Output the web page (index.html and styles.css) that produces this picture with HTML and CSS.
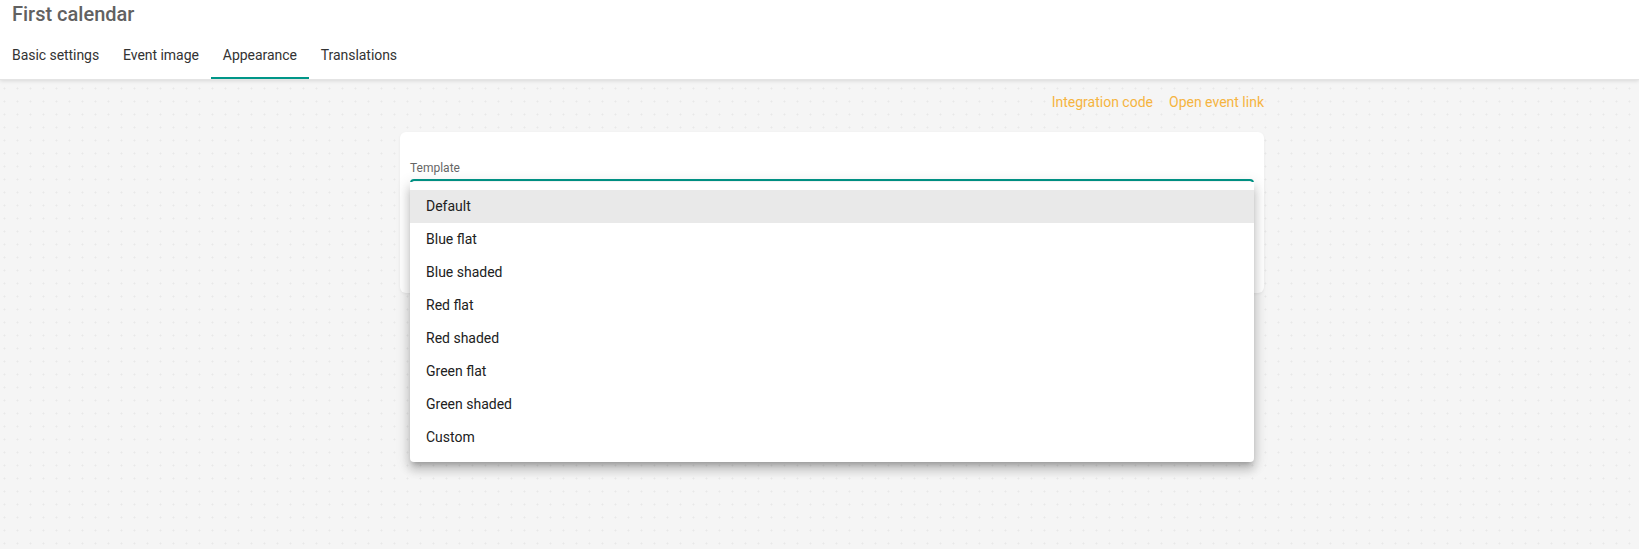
FILE: index.html
```html
<!DOCTYPE html>
<html lang="en">
<head>
  <meta charset="UTF-8" />
  <title>First calendar - Appearance</title>
  <meta name="viewport" content="width=device-width, initial-scale=1.0" />
  <link rel="stylesheet" href="styles.css">
</head>
<body>
  <header class="topbar">
    <h1 class="title">First calendar</h1>
    <nav class="tabs">
      <a class="tab">Basic settings</a>
      <a class="tab">Event image</a>
      <a class="tab active">Appearance</a>
      <a class="tab">Translations</a>
    </nav>
  </header>

  <main class="content">
    <div class="links">
      <a class="link">Integration code</a>
      <a class="link">Open event link</a>
    </div>

    <section class="card">
      <label class="field-label">Template</label>
      <div class="select">
        <ul class="menu">
          <li class="option selected">Default</li>
          <li class="option">Blue flat</li>
          <li class="option">Blue shaded</li>
          <li class="option">Red flat</li>
          <li class="option">Red shaded</li>
          <li class="option">Green flat</li>
          <li class="option">Green shaded</li>
          <li class="option">Custom</li>
        </ul>
      </div>
    </section>
  </main>
</body>
</html>
```

FILE: styles.css
```css
html, body {
  height: 100%;
}
body {
  margin: 0;
  font-family: Roboto, 'Noto Sans', sans-serif;
  color: #212121;
  background-color: #f5f5f5;
  background-image: radial-gradient(circle at 4.5px 10.5px, #e8e8e8 0.8px, transparent 1.2px);
  background-size: 13px 13px;
  overflow: hidden;
}
.topbar {
  background: #fff;
  border-bottom: 1px solid #e4e4e4;
  box-shadow: 0 1px 4px rgba(0, 0, 0, 0.12);
  position: relative;
  z-index: 1;
}
.title {
  margin: 0;
  padding: 0 12px;
  height: 31px;
  line-height: 28px;
  font-size: 20px;
  font-weight: 500;
  color: #616161;
}
.tabs {
  display: flex;
  height: 48px;
}
.tab {
  display: flex;
  align-items: center;
  padding: 0 12px;
  padding-top: 2px;
  font-size: 14px;
  letter-spacing: -0.05px;
  color: #333;
  border-bottom: 2px solid transparent;
  box-sizing: border-box;
}
.tab.active {
  border-bottom-color: #009688;
}

.content {
  width: 864px;
  margin-left: 400px;
  padding-top: 12px;
}
.links {
  display: flex;
  justify-content: flex-end;
  gap: 16px;
  line-height: 20px;
  font-size: 14px;
}
.link {
  color: #f5b43f;
  cursor: pointer;
}
.card {
  margin-top: 20px;
  background: #fff;
  border-radius: 6px;
  box-shadow: 0 1px 3px rgba(0, 0, 0, 0.06);
  padding: 28px 10px 74px;
}
.field-label {
  display: block;
  font-size: 12px;
  line-height: 16px;
  color: #666;
  margin-bottom: 3px;
}
.select {
  position: relative;
  height: 40px;
  border: 2px solid #009688;
  border-radius: 4px;
  box-sizing: border-box;
}
.menu {
  position: absolute;
  top: 1px;
  left: -2px;
  right: -2px;
  margin: 0;
  padding: 8px 0;
  list-style: none;
  background: #fff;
  border-radius: 0 0 4px 4px;
  box-shadow: 0 5px 5px -3px rgba(0, 0, 0, 0.2), 0 8px 10px 1px rgba(0, 0, 0, 0.14), 0 3px 14px 2px rgba(0, 0, 0, 0.12);
  z-index: 2;
}
.option {
  height: 33px;
  line-height: 33px;
  padding: 0 16px;
  font-size: 14px;
  color: #212121;
}
.option.selected {
  background: #e9e9e9;
}
```
